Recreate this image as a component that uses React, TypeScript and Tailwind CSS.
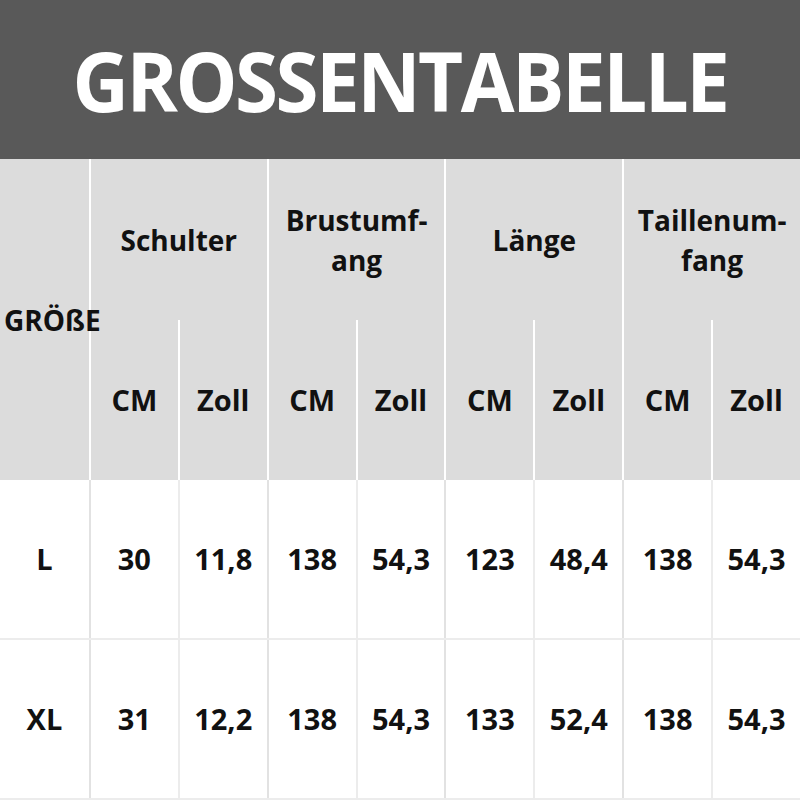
const groups = [
  ["Schulter"],
  ["Brustumf-", "ang"],
  ["Länge"],
  ["Taillenum-", "fang"],
];

const rows = [
  ["L", "30", "11,8", "138", "54,3", "123", "48,4", "138", "54,3"],
  ["XL", "31", "12,2", "138", "54,3", "133", "52,4", "138", "54,3"],
];

export default function App() {
  return (
    <div
      className="w-[800px] h-[800px] overflow-hidden bg-white text-[#111] font-bold"
      style={{ fontFamily: '"Open Sans", "Noto Sans", sans-serif' }}
    >
      {/* TITEL */}
      <div className="h-[159px] bg-[#595959] flex items-center justify-center">
        <h1 className="text-white text-[78px] leading-none tracking-[-2.5px] scale-y-[1.06]">
          GROSSENTABELLE
        </h1>
      </div>

      {/* KOPF */}
      <div className="grid grid-cols-9 grid-rows-[161px_160px] bg-[#dcdcdc]">
        <div className="row-span-2 flex items-center pl-[4px] text-[28px] whitespace-nowrap relative z-10">
          GRÖßE
        </div>
        {groups.map((g, i) => (
          <div
            key={i}
            className="col-span-2 border-l-2 border-white flex flex-col items-center justify-center text-[28px] leading-[40px]"
          >
            {g.map((l) => (
              <span key={l}>{l}</span>
            ))}
          </div>
        ))}
        {groups.map((_, i) => [
          <div
            key={`c${i}`}
            className="border-l-2 border-white flex items-center justify-center text-[29px]"
          >
            CM
          </div>,
          <div
            key={`z${i}`}
            className="border-l-2 border-white flex items-center justify-center text-[29px]"
          >
            Zoll
          </div>,
        ])}
      </div>

      {/* WERTE */}
      {rows.map((r, ri) => (
        <div
          key={ri}
          className="grid grid-cols-9 h-[160px] border-b-2 border-[#ececec]"
        >
          {r.map((v, ci) => (
            <div
              key={ci}
              className={
                ci === 0
                  ? "flex items-center justify-center text-[29px]"
                  : ci % 2 === 1
                    ? "border-l-2 border-[#e2e2e2] flex items-center justify-center text-[29px]"
                    : "border-l-2 border-[#ececec] flex items-center justify-center text-[29px]"
              }
            >
              {v}
            </div>
          ))}
        </div>
      ))}
    </div>
  );
}
